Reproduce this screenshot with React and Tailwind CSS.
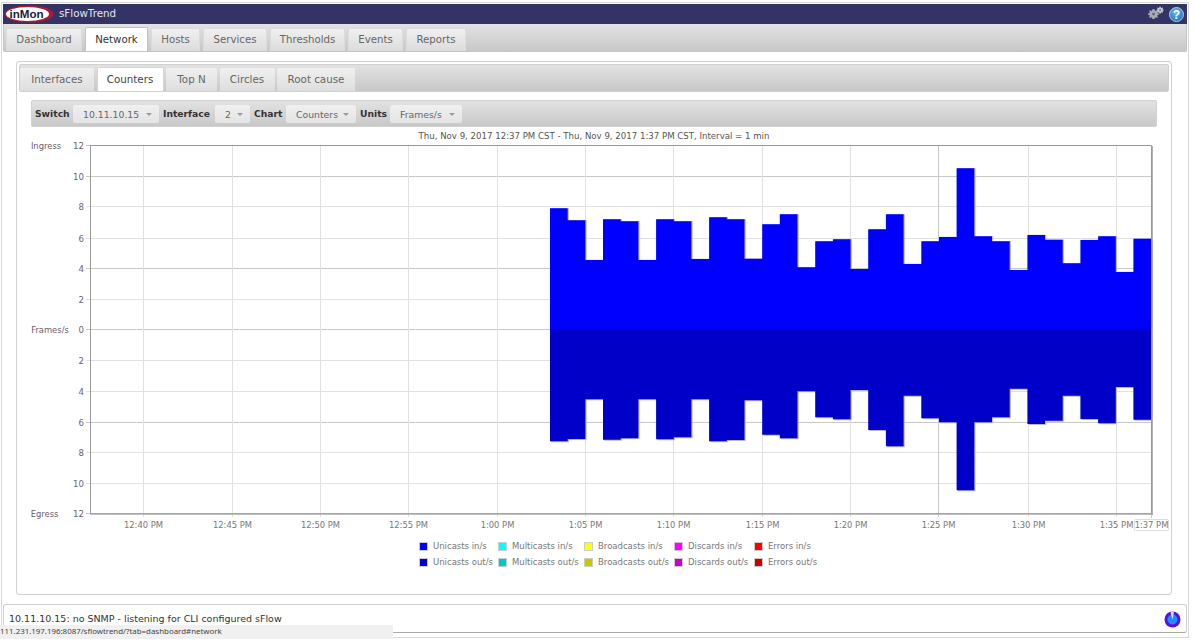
import React from "react";

const font = { fontFamily: '"DejaVu Sans", Verdana, sans-serif' };
const X0 = 550, W = 17.68, ZERO = 329;
const ups = [208.3,220.3,260,219.3,221.3,260,219.3,221.3,259,217.3,219.3,258.7,224.3,214.3,267.3,241.3,239.3,269,229.3,214.3,264,241.3,237,168.3,236.3,241.3,270,235,239.7,263.3,240,236.3,272,238.7];
const downs = [441.3,439,399.3,439.7,438.3,399.3,439.3,437.3,399.3,441.3,440,400.3,434.7,438.3,391.3,417.3,419.3,390,430,446.3,395.7,418.3,422.3,490.3,422.3,417.3,388.7,424,420.7,395.7,419,423.3,387,419.7];

function stepPath(vals) {
  let d = `M${X0} ${ZERO}`;
  vals.forEach((v, i) => {
    d += ` L${(X0 + i * W).toFixed(1)} ${v} L${(X0 + (i + 1) * W).toFixed(1)} ${v}`;
  });
  return d + ` L${(X0 + vals.length * W).toFixed(1)} ${ZERO} Z`;
}

const yTicks = [
  [145.5, "12", 1], [176.5, "10", 1], [206.5, "8", 0], [238.5, "6", 0], [268.5, "4", 1], [299.5, "2", 0], [329.5, "0", 1],
  [360.5, "2", 0], [391.5, "4", 0], [422.5, "6", 1], [452.5, "8", 0], [483.5, "10", 0], [513.5, "12", 1],
];
const xTicks = [
  [143.5, "12:40 PM"], [232.5, "12:45 PM"], [320.5, "12:50 PM"], [408.5, "12:55 PM"], [497.5, "1:00 PM"], [585.5, "1:05 PM"],
  [673.5, "1:10 PM"], [762.5, "1:15 PM"], [850.5, "1:20 PM"], [938.5, "1:25 PM", 1], [1028.5, "1:30 PM"], [1116.5, "1:35 PM"],
];

function Chart() {
  return (
    <svg width="1150" height="399" viewBox="19 142 1150 399" className="block" style={font}>
      <text x="46" y="149" fontSize="8.4" fill="#6b5b6b" textAnchor="middle">Ingress</text>
      <text x="50" y="333" fontSize="8.4" fill="#6b5b6b" textAnchor="middle">Frames/s</text>
      <text x="44.5" y="517" fontSize="8.4" fill="#6b5b6b" textAnchor="middle">Egress</text>
      {yTicks.map(([y, t, dark], i) => (
        <g key={i}>
          <line x1="86" x2="1151" y1={y} y2={y} stroke={dark ? "#c8c8c8" : "#e0e0e0"} strokeWidth="1" />
          <text x="84" y={y + 3} fontSize="8.6" fill="#70607a" textAnchor="end">{t}</text>
        </g>
      ))}
      {xTicks.map(([x, t, dark], i) => (
        <g key={i}>
          <line x1={x} x2={x} y1="145" y2="517" stroke={dark ? "#c8c8c8" : "#e0e0e0"} strokeWidth="1" />
          <text x={x} y="528" fontSize="8.4" fill="#777" textAnchor="middle">{t}</text>
        </g>
      ))}
      <line x1="1151.5" x2="1151.5" y1="514" y2="518" stroke="#c8c8c8" />
      <path d={stepPath(ups)} fill="#b8b8c8" transform="translate(1.2 -0.2)" />
      <path d={stepPath(downs)} fill="#b8b8c8" transform="translate(1.2 1)" />
      <path d={stepPath(ups)} fill="#0000ff" />
      <path d={stepPath(downs)} fill="#0000c8" />
      <path d="M90.5 513.5 V145.5 H1151.5 V513.5 Z" fill="none" stroke="#999" strokeWidth="1" />
      <line x1="1152" x2="1152" y1="146" y2="515" stroke="#999" strokeWidth="1.5" />
      <line x1="90" x2="1153" y1="514" y2="514" stroke="#aaa" strokeWidth="1.5" />
      <rect x="1134.5" y="519.5" width="34" height="11" fill="#fff" stroke="#ddd" rx="1" />
      <text x="1151.5" y="528" fontSize="8.4" fill="#777" textAnchor="middle">1:37 PM</text>
    </svg>
  );
}

const legend = [
  ["#0000ff", "Unicasts in/s"], ["#00ffff", "Multicasts in/s"], ["#ffff00", "Broadcasts in/s"], ["#ff00ff", "Discards in/s"], ["#ff0000", "Errors in/s"],
  ["#0000c8", "Unicasts out/s"], ["#00c8c8", "Multicasts out/s"], ["#c8c800", "Broadcasts out/s"], ["#c800c8", "Discards out/s"], ["#c80000", "Errors out/s"],
];

function Tab({ children, active, cls }) {
  return (
    <div
      className={`flex items-center justify-center rounded-t-[2px] border border-b-0 text-[10.2px] ${cls} ${
        active
          ? "bg-white border-[#a9c6ea] text-[#333] h-[24px]"
          : "bg-gradient-to-b from-[#f0f0f0] to-[#dcdcdc] border-[#dcdcdc] text-[#666] h-[23px]"
      }`}
    >
      {children}
    </div>
  );
}

function SubTab({ children, active, cls }) {
  return (
    <div
      className={`flex items-center justify-center rounded-t-[2px] text-[10.3px] ${cls} ${
        active
          ? "bg-white border border-b-0 border-[#d4d4d4] text-[#444] h-[24px]"
          : "bg-gradient-to-b from-[#f0f0f0] to-[#dedede] text-[#666] h-[23px]"
      }`}
    >
      {children}
    </div>
  );
}

function Drop({ children, cls }) {
  return (
    <div className={`flex items-center justify-between h-[18px] rounded-[2px] bg-gradient-to-b from-[#f0f0f0] to-[#e4e4e4] pl-[10px] pr-[7px] pt-[2px] text-[9.3px] text-[#666] ${cls}`}>
      <span>{children}</span>
      <span className="w-0 h-0 border-x-[3px] border-x-transparent border-t-[3px] border-t-[#999]" />
    </div>
  );
}

function Label({ children, cls }) {
  return <span className={`font-bold text-[9.2px] text-[#333] whitespace-nowrap ${cls}`}>{children}</span>;
}

function Logo() {
  return (
    <svg width="50" height="18" viewBox="0 0 50 18" className="shrink-0">
      <ellipse cx="25" cy="9" rx="24.5" ry="8.5" fill="#b5172f" />
      <ellipse cx="23.5" cy="9" rx="21.5" ry="7" fill="#fff" />
      <text x="5.5" y="13" fontSize="11.6" fontWeight="bold" fill="#1c1c3a" style={{ fontFamily: '"Liberation Sans", sans-serif' }}>inMon</text>
    </svg>
  );
}

function Gears() {
  const gear = "M6 0.5 L7.2 0.6 L7.5 2.1 L8.6 2.6 L9.9 1.8 L10.8 2.7 L10 4 L10.5 5 L12 5.4 L12 6.6 L10.5 7 L10 8 L10.8 9.3 L9.9 10.2 L8.6 9.4 L7.5 9.9 L7.2 11.4 L4.8 11.4 L4.5 9.9 L3.4 9.4 L2.1 10.2 L1.2 9.3 L2 8 L1.5 7 L0 6.6 L0 5.4 L1.5 5 L2 4 L1.2 2.7 L2.1 1.8 L3.4 2.6 L4.5 2.1 L4.8 0.6 Z";
  return (
    <svg width="16" height="16" viewBox="0 0 16 16" className="shrink-0">
      <g transform="translate(0 2.6) scale(0.92)">
        <path d={gear} fill="#a9adb3" />
        <circle cx="6" cy="6" r="1.4" fill="#5a5a7a" />
      </g>
      <g transform="translate(8.4 0.4) scale(0.62)">
        <path d={gear} fill="#c4c6ca" />
        <circle cx="6" cy="6" r="1.4" fill="#5a5a7a" />
      </g>
    </svg>
  );
}

function Help() {
  return (
    <svg width="15" height="15" viewBox="0 0 15 15" className="shrink-0">
      <defs>
        <radialGradient id="hg" cx="45%" cy="35%" r="70%">
          <stop offset="0" stopColor="#6cb8ee" />
          <stop offset="1" stopColor="#1a6fc0" />
        </radialGradient>
      </defs>
      <circle cx="7.5" cy="7.5" r="7" fill="url(#hg)" stroke="#cfe4f5" strokeWidth="0.8" />
      <text x="7.5" y="11.8" textAnchor="middle" fontSize="12" fontWeight="bold" fill="#fff" style={{ fontFamily: '"Liberation Sans", sans-serif' }}>?</text>
    </svg>
  );
}

function Spinner() {
  return (
    <svg width="17" height="17" viewBox="0 0 17 17" className="shrink-0">
      <circle cx="8.5" cy="8.5" r="8" fill="#5a0fe0" />
      <circle cx="8.5" cy="8.5" r="5" fill="#1a90ff" />
      <path d="M8.5 8.5 L6.4 0.8 L10 0.6 Z" fill="#dcdcdc" />
    </svg>
  );
}

export default function App() {
  return (
    <div className="relative w-[1195px] h-[641px] bg-white overflow-hidden" style={font}>
      <div className="w-[1188px] h-[636px] ml-px mt-[2px] border border-[#d8d8d8] px-[1px] pt-[1px]">
        <div className="h-[20px] bg-[#333366] flex items-center pl-[1px] pr-[3px] gap-[5px]">
          <Logo />
          <span className="text-[10.3px] text-[#e4e4ee] flex-1">sFlowTrend</span>
          <Gears />
          <Help />
        </div>
        <div className="h-[28px] flex items-end gap-[3px] pl-[2px] bg-gradient-to-b from-[#e2e2e2] to-[#c8c8c8] border border-t-0 border-[#c4c4c4] rounded-b-[2px]">
          <Tab cls="w-[76px]">Dashboard</Tab>
          <Tab cls="w-[63px]" active>Network</Tab>
          <Tab cls="w-[49px]">Hosts</Tab>
          <Tab cls="w-[64px]">Services</Tab>
          <Tab cls="w-[75px]">Thresholds</Tab>
          <Tab cls="w-[55px]">Events</Tab>
          <Tab cls="w-[60px]">Reports</Tab>
        </div>

        <div className="mt-[9px] ml-[13px] w-[1156px] h-[534px] border border-[#d0d0d0] rounded-[3px] p-[2px]">
          <div className="h-[28px] flex items-end gap-[2.5px] bg-gradient-to-b from-[#e2e2e2] to-[#c8c8c8] border border-[#d0d0d0] rounded-[2px]">
            <SubTab cls="w-[74px]">Interfaces</SubTab>
            <SubTab cls="w-[67px]" active>Counters</SubTab>
            <SubTab cls="w-[51px]">Top N</SubTab>
            <SubTab cls="w-[55px]">Circles</SubTab>
            <SubTab cls="w-[78px]">Root cause</SubTab>
          </div>
          <div className="mt-[8px] ml-[12px] w-[1126px] h-[27px] flex items-center pl-[3px] gap-[4px] bg-gradient-to-b from-[#e2e2e2] to-[#c8c8c8] border border-[#d0d0d0] rounded-[2px]">
            <Label cls="w-[34px]">Switch</Label>
            <Drop cls="w-[86px]">10.11.10.15</Drop>
            <Label cls="w-[48px]">Interface</Label>
            <Drop cls="w-[35px]">2</Drop>
            <Label cls="w-[28px]">Chart</Label>
            <Drop cls="w-[70px]">Counters</Drop>
            <Label cls="w-[26px]">Units</Label>
            <Drop cls="w-[72px]">Frames/s</Drop>
          </div>
          <div className="mt-[3px] text-center text-[8.6px] text-[#555] leading-[12px]">
            Thu, Nov 9, 2017 12:37 PM CST - Thu, Nov 9, 2017 1:37 PM CST, Interval = 1 min
          </div>
          <Chart />
          <div className="ml-[400px] grid grid-cols-[79px_86px_90px_80px_auto] gap-y-[6px]">
            {legend.map(([c, t]) => (
              <div key={t} className="flex items-center h-[10px] text-[8.5px] text-[#777]">
                <span className="w-[9px] h-[9px] mr-[5px] border border-[#ccc]" style={{ background: c }} />
                {t}
              </div>
            ))}
          </div>
        </div>

        <div className="mt-[9px] h-[29px] border border-[#cfcfcf] border-b-[#aaa] rounded-[3px] flex items-center pl-[5px] pr-[5px] pt-[1px] justify-between">
          <span className="text-[9.5px] text-[#333]">10.11.10.15: no SNMP - listening for CLI configured sFlow</span>
          <Spinner />
        </div>
      </div>
      <div className="absolute left-0 top-[625px] w-[393px] h-[14px] bg-[#f0f0f0] flex items-center text-[7.9px] text-[#444]" style={{ fontFamily: '"Noto Sans", sans-serif' }}>
        111.231.197.196:8087/sflowtrend/?tab=dashboard#network
      </div>
    </div>
  );
}
